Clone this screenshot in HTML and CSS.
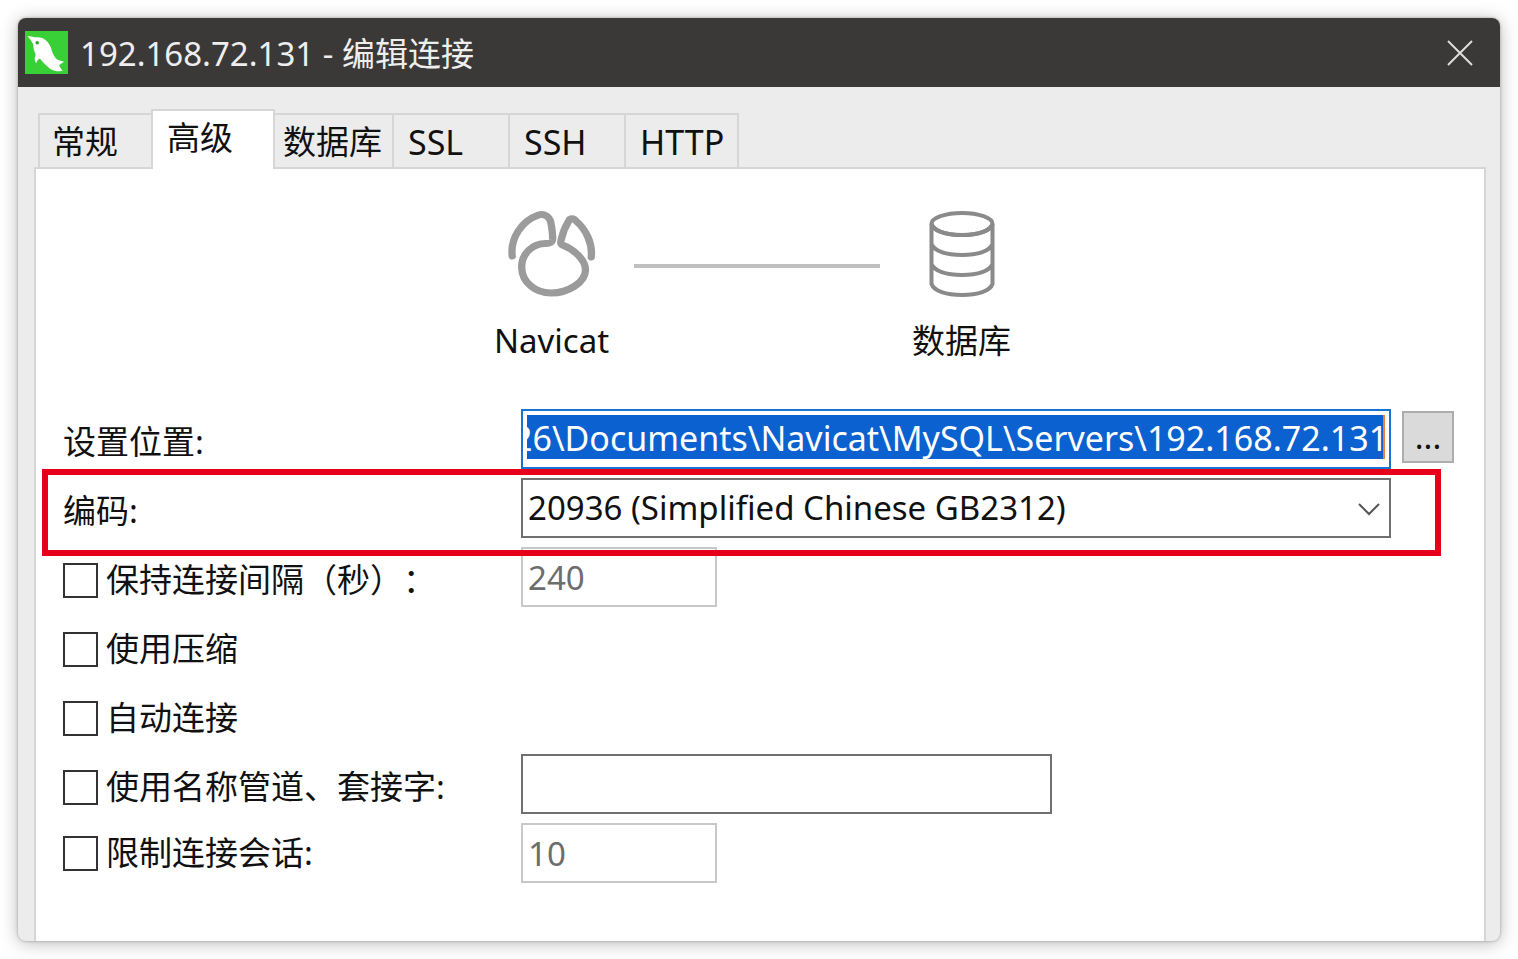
FILE: index.html
```html
<!DOCTYPE html>
<html lang="zh-CN">
<head>
<meta charset="utf-8">
<meta name="viewport" content="width=device-width, initial-scale=1">
<title>192.168.72.131 - 编辑连接</title>
<link rel="stylesheet" href="styles.css">
</head>
<body>
<main class="window">
  <header class="titlebar">
    <svg class="app-icon" viewBox="0 0 44 44" aria-hidden="true">
      <rect width="44" height="44" fill="#39cf37"/>
      <path d="M2.500 5C6 5 9 6.500 12 6.500C19 6 24 11 26.500 17C28 22 29 26 32.500 29C35 30.500 38 31 40 31.500C38 33 35.500 34 35 35C35.500 37 37.500 39 38.500 41C34 41.500 29 41 25 38C21 35 18 32 15.500 28.500C14 28.500 12 30.500 11.500 33C9.500 31 9.500 27 11 24C9 20 8.500 17 8.500 14C7.500 11 5 8 2.500 5Z" fill="#fff"/>
      <circle cx="12.500" cy="12" r="1.800" fill="#2aa52a"/>
    </svg>
    <h1 class="title">192.168.72.131 - 编辑连接</h1>
    <button class="close" type="button" aria-label="关闭">
      <svg viewBox="0 0 28 28" aria-hidden="true"><path d="M2 2L26 26M26 2L2 26"/></svg>
    </button>
  </header>

  <div class="content">
    <div class="tabs" role="tablist">
      <button class="tab tab-edge" type="button" role="tab">常规</button>
      <button class="tab tab-active" type="button" role="tab" aria-selected="true">高级</button>
      <button class="tab tab-tight" type="button" role="tab">数据库</button>
      <button class="tab tab-latin" type="button" role="tab">SSL</button>
      <button class="tab tab-latin" type="button" role="tab">SSH</button>
      <button class="tab tab-latin tab-edge" type="button" role="tab">HTTP</button>
    </div>

    <section class="panel" role="tabpanel">
      <div class="route">
        <div class="node">
          <svg class="node-icon" viewBox="0 1 86 88" preserveAspectRatio="none" aria-hidden="true">
            <g fill="none" stroke="#9b9b9b" stroke-width="7" stroke-linecap="round" stroke-linejoin="round">
              <path d="M5 47C3 29 14 12 30 6C36 4 41 8 42 14C43 20 44 26 43.500 31C43 34 41 34.500 37 34.500C24 34.500 14 45 14 58C14 73 27 84 42 84C59 84 75 73 75 61C75 50 63 40 53 36C51 35 51 33 52 30C53 25 56 17 59 12C60 9 64 9 66 12C75 20 82 34 80.500 48"/>
            </g>
          </svg>
          <span>Navicat</span>
        </div>
        <div class="wire"></div>
        <div class="node">
          <svg class="node-icon" viewBox="0 0 90 88" aria-hidden="true">
            <g fill="none" stroke="#8a8a8a" stroke-width="4">
              <ellipse cx="45" cy="14" rx="30.500" ry="11"/>
              <path d="M14.500 14V74C17 81 29 85 45 85S73 81 75.500 74V14M14.500 34C17 41 29 45 45 45S73 41 75.500 34M14.500 54C17 61 29 65 45 65S73 61 75.500 54M14.500 14C17 21 29 25 45 25S73 21 75.500 14"/>
            </g>
          </svg>
          <span>数据库</span>
        </div>
      </div>

      <form class="form">
        <div class="row">
          <label class="label" for="path">设置位置:</label>
          <div class="path-box"><input class="path" id="path" type="text" value="26\Documents\Navicat\MySQL\Servers\192.168.72.131"></div>
          <button class="browse" type="button" aria-label="浏览">...</button>
        </div>
        <div class="row row-marked">
          <label class="label" for="encoding">编码:</label>
          <div class="select-box">
            <select class="field" id="encoding"><option>20936 (Simplified Chinese GB2312)</option></select>
            <svg class="chevron" viewBox="0 0 22 14" aria-hidden="true"><path d="M1 2L11 12L21 2"/></svg>
          </div>
        </div>
        <div class="row">
          <label class="label"><input class="check" type="checkbox">保持连接间隔（秒）：</label>
          <input class="field field-short" type="text" value="240" aria-label="保持连接间隔" disabled>
        </div>
        <div class="row">
          <label class="label"><input class="check" type="checkbox">使用压缩</label>
        </div>
        <div class="row">
          <label class="label"><input class="check" type="checkbox">自动连接</label>
        </div>
        <div class="row">
          <label class="label"><input class="check" type="checkbox">使用名称管道、套接字:</label>
          <input class="field field-medium" type="text" aria-label="名称管道、套接字">
        </div>
        <div class="row row-last">
          <label class="label"><input class="check" type="checkbox">限制连接会话:</label>
          <input class="field field-short" type="text" value="10" aria-label="限制连接会话" disabled>
        </div>
      </form>
    </section>
  </div>
</main>
</body>
</html>
```

FILE: styles.css
```css
* {
  box-sizing: border-box;
}

body {
  margin: 0;
  padding: 18px;
  min-height: 100vh;
  display: flex;
  background: #fff;
  color: #111;
  font: 33px/44px "Noto Sans", "Noto Sans CJK SC", sans-serif;
  text-spacing-trim: space-all;
}

button,
input,
select {
  margin: 0;
  font: inherit;
  color: inherit;
}

.window {
  flex: 1;
  min-width: 0;
  display: flex;
  flex-direction: column;
  overflow: hidden;
  border-radius: 8px;
  background: #ececec;
  box-shadow: 0 0 3px rgba(0, 0, 0, 0.3), 0 2px 18px rgba(0, 0, 0, 0.28);
}

.titlebar {
  display: flex;
  align-items: center;
  gap: 12px;
  height: 69px;
  padding: 0 26px 0 7px;
  background: #3b3937;
  color: #eee;
}

.app-icon {
  width: 43px;
  height: 43px;
}

.title {
  flex: 1;
  margin: 0;
  padding-top: 2px;
  font-size: 33px;
  font-weight: 400;
}

.close {
  display: flex;
  padding: 0;
  border: 0;
  background: none;
}

.close svg {
  width: 28px;
  height: 28px;
  fill: none;
  stroke: #ddd;
  stroke-width: 2;
}

.content {
  flex: 1;
  display: flex;
  flex-direction: column;
  padding: 22px 14px 0 16px;
}

.tabs {
  display: flex;
  align-items: flex-end;
  padding-left: 4px;
}

.tab {
  min-width: 116px;
  height: 54px;
  padding: 2px 8px 0 12px;
  border: solid #d6d6d6;
  border-width: 2px 2px 0 0;
  background: #ececec;
  text-align: left;
}

.tab-edge {
  min-width: 113px;
}

.tab-edge:first-child {
  border-width: 2px 0 0 2px;
}

.tab-tight {
  min-width: 119px;
  padding: 2px 8px 0;
}

.tab-latin {
  padding-left: 14px;
  font-size: 34px;
}

.tab-active {
  z-index: 1;
  min-width: 124px;
  height: 60px;
  margin-bottom: -2px;
  padding: 0 14px 4px;
  border-width: 2px 2px 0;
  background: #fff;
}

.panel {
  flex: 1;
  padding: 41px 30px 56px 27px;
  border: solid #d6d6d6;
  border-width: 2px 2px 0;
  background: #fff;
}

.route {
  display: flex;
  justify-content: center;
  margin-bottom: 46px;
  padding-right: 4px;
}

.node {
  width: 164px;
  display: flex;
  flex-direction: column;
  align-items: center;
  gap: 21px;
}

.node-icon {
  width: 90px;
  height: 88px;
}

.wire {
  width: 246px;
  height: 4px;
  margin-top: 54px;
  background: #c0c0c0;
}

.form {
  display: flex;
  flex-direction: column;
  gap: 9px;
}

.row {
  position: relative;
  display: flex;
  align-items: center;
  height: 60px;
}

.row-marked::after {
  content: "";
  position: absolute;
  inset: -9px 13px -18px -21px;
  border: 6px solid #e60019;
  pointer-events: none;
  z-index: 1;
}

.label {
  flex: 0 0 458px;
  display: flex;
  align-items: center;
  gap: 8px;
  padding-top: 6px;
  white-space: nowrap;
}

.row-last .label {
  padding-top: 0;
}

.check {
  appearance: none;
  width: 35px;
  height: 35px;
  border: 2px solid #333;
  background: #fff;
}

.field {
  height: 60px;
  padding: 0 5px;
  border: 2px solid #707070;
  border-radius: 0;
  background: #fff;
}

.field:disabled {
  border-color: #c8c8c8;
  color: #6d6d6d;
}

.field-short {
  width: 196px;
}

.field-medium {
  width: 531px;
}

.path-box {
  flex: 1;
  min-width: 0;
  height: 60px;
  padding: 4px;
  border: 2px solid #1874d2;
}

.path {
  display: block;
  width: 100%;
  height: 44px;
  padding: 2px 0 0;
  border: 0;
  border-right: 2px solid #f08030;
  outline: 0;
  background: #0b61d0;
  color: #fff;
  font-size: 34px;
  text-indent: -14px;
}

.browse {
  width: 52px;
  height: 52px;
  margin: 0 0 4px 11px;
  padding: 0;
  border: 2px solid #adadad;
  background: #dadada;
}

.select-box {
  position: relative;
  flex: 1;
  margin-right: 63px;
}

.select-box .field {
  display: block;
  width: 100%;
  appearance: none;
}

.chevron {
  position: absolute;
  right: 11px;
  top: 24px;
  width: 22px;
  height: 14px;
  fill: none;
  stroke: #555;
  stroke-width: 2;
  pointer-events: none;
}
```
